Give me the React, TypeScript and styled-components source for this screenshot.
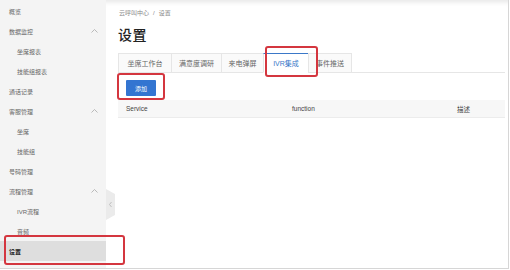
import React from "react";
import styled, { createGlobalStyle } from "styled-components";

const Global = createGlobalStyle`
  html, body { margin: 0; padding: 0; background: #fff; }
  body { font-family: "Liberation Sans", "Noto Sans CJK SC", sans-serif; }
  * { box-sizing: border-box; }
`;

const Frame = styled.div`
  width: 509px;
  height: 269px;
  display: flex;
  border-right: 1px solid #d6d6d6;
  border-bottom: 1px solid #d6d6d6;
  overflow: hidden;
  font-family: "Liberation Sans", "Noto Sans CJK SC", sans-serif;
`;

const Sidebar = styled.nav`
  position: relative;
  width: 106px;
  flex: none;
  background: #f4f4f4;
  padding-top: 1px;
  display: flex;
  flex-direction: column;
  z-index: 2;
`;

const NavItem = styled.div<{ $sub?: boolean; $active?: boolean }>`
  position: relative;
  height: 20px;
  display: flex;
  align-items: center;
  justify-content: space-between;
  padding: 0 8px 0 ${(p) => (p.$sub ? 17 : 9)}px;
  font-size: 6px;
  color: ${(p) => (p.$active ? "#222" : "#666")};
  font-weight: ${(p) => (p.$active ? 700 : 400)};
  background: ${(p) => (p.$active ? "#dedede" : "transparent")};
`;

const Highlight = styled.span<{ $t: number; $r: number; $b: number; $l: number }>`
  position: absolute;
  top: ${(p) => p.$t}px;
  right: ${(p) => p.$r}px;
  bottom: ${(p) => p.$b}px;
  left: ${(p) => p.$l}px;
  border: 2px solid #d4363f;
  border-radius: 3px;
  pointer-events: none;
  z-index: 5;
`;

const Handle = styled.div`
  position: absolute;
  left: 106px;
  top: 189px;
  width: 9px;
  height: 31px;
  display: flex;
`;

const Main = styled.main`
  flex: 1;
  min-width: 0;
  padding: 10px 3px 0 12px;
  box-shadow: inset 0 6px 5px -4px rgba(0, 0, 0, 0.1);
  display: flex;
  flex-direction: column;
`;

const Breadcrumb = styled.div`
  font-size: 6px;
  line-height: 7px;
  color: #888;
  padding-left: 1px;
  display: flex;
  gap: 4px;
`;

const Title = styled.h1`
  margin: 10px 0 0;
  font-size: 14px;
  line-height: 16px;
  font-weight: 500;
  color: #222;
  letter-spacing: 0.5px;
`;

const TabBar = styled.div`
  margin-top: 10px;
  display: flex;
  height: 20px;
  border-bottom: 1px solid #e6e6e6;
`;

const Tab = styled.div<{ $active?: boolean; $last?: boolean; $w: number }>`
  position: relative;
  width: ${(p) => p.$w}px;
  flex: none;
  height: 20px;
  display: flex;
  align-items: center;
  justify-content: center;
  font-size: 7px;
  white-space: nowrap;
  color: ${(p) => (p.$active ? "#3b78c8" : "#666")};
  background: ${(p) => (p.$active ? "#fff" : "#fafafa")};
  border-left: 1px solid #e6e6e6;
  border-right: ${(p) => (p.$last ? "1px solid #e6e6e6" : "none")};
  border-top: ${(p) => (p.$active ? "1px solid #3b78c8" : "1px solid #e6e6e6")};
  margin-bottom: -1px;
  border-bottom: 1px solid ${(p) => (p.$active ? "#fff" : "#e6e6e6")};
`;

const Toolbar = styled.div`
  margin-top: 7px;
  padding-left: 8px;
  display: flex;
`;

const ButtonWrap = styled.div`
  position: relative;
`;

const Button = styled.button`
  width: 30px;
  height: 16px;
  border: none;
  border-radius: 1px;
  background: #3375d1;
  color: #fff;
  font-size: 6px;
  font-family: inherit;
  padding: 0;
  display: flex;
  align-items: center;
  justify-content: center;
`;

const TableHead = styled.div`
  margin-top: 4px;
  height: 18px;
  display: grid;
  grid-template-columns: 166px 165px 1fr;
  align-items: center;
  background: #f7f7f7;
  border-bottom: 1px solid #ececec;
  font-size: 6.5px;
  color: #444;
`;

const HeadCell = styled.div`
  padding-left: 8px;
`;

const Chevron = () => (
  <svg width="7" height="4" viewBox="0 0 7 4">
    <path d="M0.5 3.5 L3.5 0.5 L6.5 3.5" fill="none" stroke="#aaa" strokeWidth="0.8" />
  </svg>
);

const items: { label: string; sub?: boolean; chevron?: boolean; active?: boolean }[] = [
  { label: "概览" },
  { label: "数据监控", chevron: true },
  { label: "坐席报表", sub: true },
  { label: "技能组报表", sub: true },
  { label: "通话记录" },
  { label: "客服管理", chevron: true },
  { label: "坐席", sub: true },
  { label: "技能组", sub: true },
  { label: "号码管理" },
  { label: "流程管理", chevron: true },
  { label: "IVR流程", sub: true },
  { label: "音频", sub: true },
  { label: "设置", active: true },
];

const tabs = [
  { label: "坐席工作台", w: 53 },
  { label: "满意度调研", w: 50 },
  { label: "来电弹屏", w: 42 },
  { label: "IVR集成", w: 45 },
  { label: "事件推送", w: 44 },
];

export default function App() {
  return (
    <>
      <Global />
      <Frame>
        <Sidebar>
          {items.map((it) => (
            <NavItem key={it.label} $sub={it.sub} $active={it.active}>
              <span>{it.label}</span>
              {it.chevron && <Chevron />}
              {it.active && <Highlight $t={-6} $r={-19} $b={-4} $l={4} />}
            </NavItem>
          ))}
          <Handle>
            <svg width="9" height="31" viewBox="0 0 9 31">
              <polygon points="0,0 9,5 9,26 0,31" fill="#ebebeb" />
              <path d="M5.5 13 L3.5 15.5 L5.5 18" fill="none" stroke="#b5b5b5" strokeWidth="0.8" />
            </svg>
          </Handle>
        </Sidebar>
        <Main>
          <Breadcrumb>
            <span>云呼叫中心</span>
            <span>/</span>
            <span>设置</span>
          </Breadcrumb>
          <Title>设置</Title>
          <TabBar>
            {tabs.map((t, i) => (
              <Tab key={t.label} $w={t.w} $active={t.label === "IVR集成"} $last={i === tabs.length - 1}>
                {t.label}
                {t.label === "IVR集成" && <Highlight $t={-8} $r={-10} $b={-5} $l={1} />}
              </Tab>
            ))}
          </TabBar>
          <Toolbar>
            <ButtonWrap>
              <Button>添加</Button>
              <Highlight $t={-7} $r={-9} $b={-4} $l={-9} />
            </ButtonWrap>
          </Toolbar>
          <TableHead>
            <HeadCell>Service</HeadCell>
            <HeadCell>function</HeadCell>
            <HeadCell>描述</HeadCell>
          </TableHead>
        </Main>
      </Frame>
    </>
  );
}
